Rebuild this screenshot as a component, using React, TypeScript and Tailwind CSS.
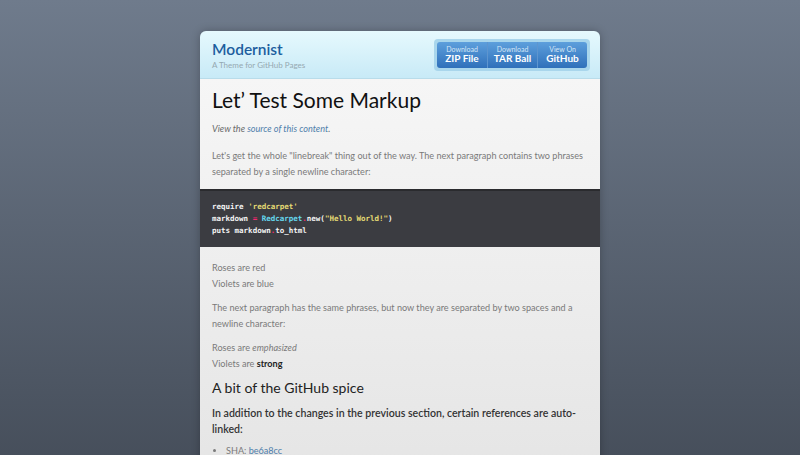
import React from 'react'

const buttons = [
    { top: 'Download', bottom: 'ZIP File' },
    { top: 'Download', bottom: 'TAR Ball' },
    { top: 'View On', bottom: 'GitHub' },
]

export default function App() {
    return (
        <div
            className="min-h-screen bg-gradient-to-b from-[#6f7b8c] to-[#434b57] pt-[31px]"
            style={{ fontFamily: 'Lato, "Open Sans", sans-serif' }}
        >
            <div className="w-[400px] mx-auto rounded-t-[6px] overflow-hidden shadow-[0_0_8px_rgba(0,0,0,0.25)]">
                {/* Header */}
                <header className="h-[48px] flex items-center justify-between pl-3 pr-[10px] bg-gradient-to-b from-[#e6f9fd] to-[#c8eaf7] border-b border-[#b9dcea]">
                    <div className="pt-[1px]">
                        <h1 className="text-[15.5px] leading-[20px] font-semibold text-[#1d5e9e]">Modernist</h1>
                        <p className="text-[8px] leading-[12px] text-[#95a8b1]">A Theme for GitHub Pages</p>
                    </div>
                    <div className="p-[3px] rounded-[4px] bg-[#a9d6ec] flex">
                        {buttons.map((b, i) => (
                            <a
                                key={b.bottom}
                                className={
                                    'w-[50px] h-[26px] flex flex-col items-center justify-center bg-gradient-to-b from-[#5d9fdc] to-[#2f70ba] text-white ' +
                                    (i === 0 ? 'rounded-l-[3px] ' : 'border-l border-[#5e95cf] ') +
                                    (i === 2 ? 'rounded-r-[3px]' : '')
                                }
                            >
                                <span className="text-[7px] leading-[8px] text-[#d4e6f7]">{b.top}</span>
                                <span className="text-[10px] leading-[11px] font-bold">{b.bottom}</span>
                            </a>
                        ))}
                    </div>
                </header>

                {/* Content */}
                <div className="bg-gradient-to-b from-[#f6f6f6] to-[#e4e4e4] pb-6">
                    <div className="px-3 pt-[8px]">
                        <h1 className="text-[21px] leading-[26px] text-[#111]">Let’ Test Some Markup</h1>
                        <p className="mt-[8px] text-[9.1px] leading-[16px] italic text-[#6a6a6a]">
                            View the <a className="text-[#4f7eab]">source of this content</a>.
                        </p>
                        <p className="mt-[11px] text-[9.1px] leading-[16px] text-[#7a7a7a]">
                            Let's get the whole "linebreak" thing out of the way. The next paragraph contains two phrases separated by a single newline character:
                        </p>
                    </div>

                    <pre
                        className="mt-[9px] bg-[#3b3c41] border-t-2 border-[#2a2b2e] px-3 pt-[10px] pb-[10px] text-[7.5px] leading-[12px] font-bold text-[#f4f4f4]"
                        style={{ fontFamily: '"DejaVu Sans Mono", "Liberation Mono", monospace' }}
                    >
                        <div>require <span className="text-[#e6db74]">'redcarpet'</span></div>
                        <div>
                            markdown <span className="text-[#f92672]">=</span> <span className="text-[#66d9ef]">Redcarpet</span>
                            <span className="text-[#f92672]">.</span>new(<span className="text-[#e6db74]">"Hello World!"</span>)
                        </div>
                        <div>
                            puts markdown<span className="text-[#f92672]">.</span>to_html
                        </div>
                    </pre>

                    <div className="px-3">
                        <p className="mt-[13px] text-[9.1px] leading-[16px] text-[#7a7a7a]">
                            Roses are red<br />Violets are blue
                        </p>
                        <p className="mt-[8px] text-[9.1px] leading-[16px] text-[#7a7a7a]">
                            The next paragraph has the same phrases, but now they are separated by two spaces and a newline character:
                        </p>
                        <p className="mt-[8px] text-[9.1px] leading-[16px] text-[#7a7a7a]">
                            Roses are <em>emphasized</em><br />Violets are <strong className="font-bold text-[#222]">strong</strong>
                        </p>
                        <h2 className="mt-[4px] text-[14px] leading-[24px] text-[#222]">A bit of the GitHub spice</h2>
                        <p className="mt-[5px] text-[10.6px] leading-[16px] font-semibold text-[#333]">
                            In addition to the changes in the previous section, certain references are auto-linked:
                        </p>
                        <ul className="mt-[6px] pl-[14px] text-[9.1px] leading-[16px] text-[#7a7a7a] list-disc">
                            <li>SHA: <a className="text-[#4f7eab]">be6a8cc</a></li>
                            <li>User@SHA ref: <a className="text-[#4f7eab]">mojombo@be6a8cc</a></li>
                        </ul>
                    </div>
                </div>
            </div>
        </div>
    )
}
